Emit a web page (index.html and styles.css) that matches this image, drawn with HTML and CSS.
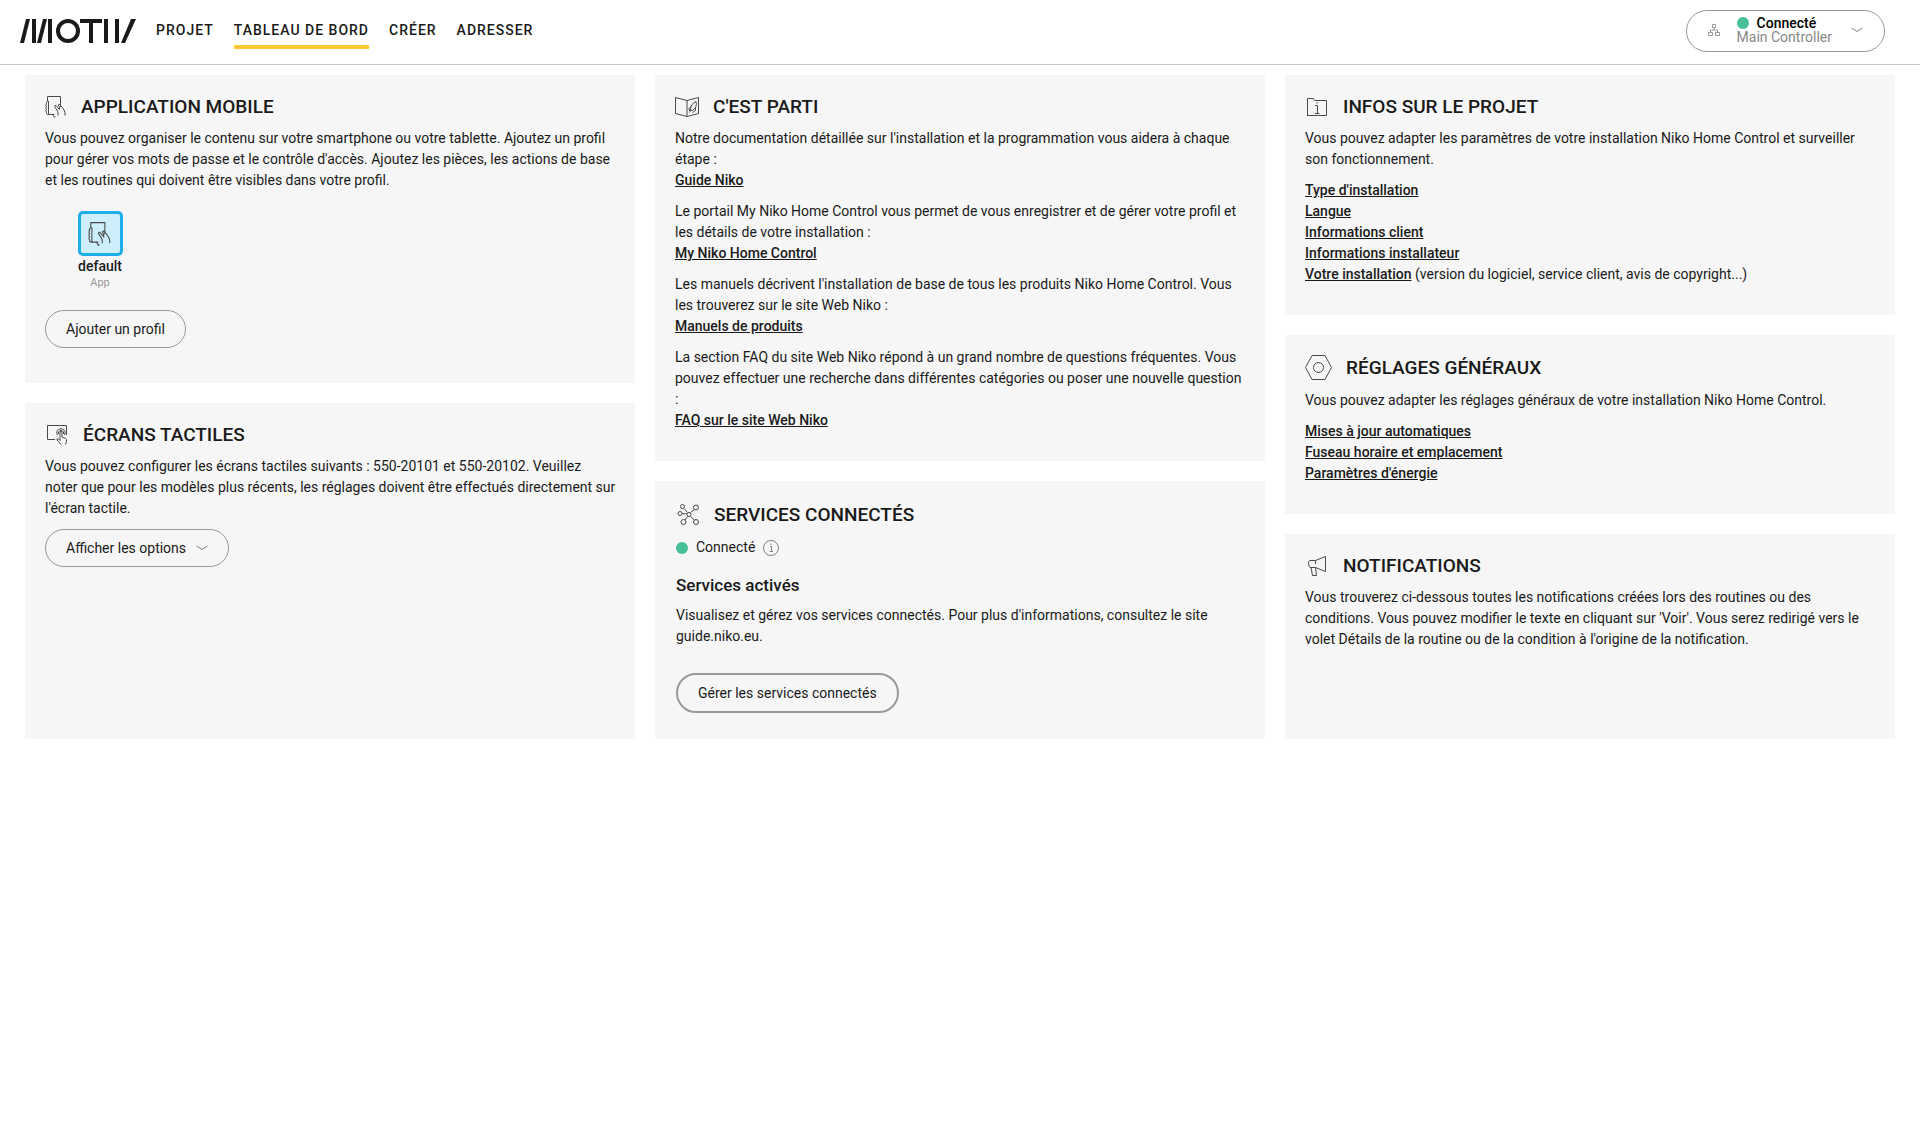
FILE: index.html
```html
<!DOCTYPE html>
<html lang="fr">
<head>
<meta charset="utf-8">
<meta name="viewport" content="width=device-width, initial-scale=1">
<title>Tableau de bord</title>
<link rel="stylesheet" href="styles.css">
</head>
<body>
<svg class="sprite" aria-hidden="true">
  <symbol id="tablet-hand" viewBox="0 0 22 24">
    <path d="M2.5 6.500V1.500H15.500V12M2.500 19.500H9.500M2.500 6.500Q.5 7.500 1.500 8.700 0 10.500 1.500 11.500 0 13 1.500 14.300 0 16 1.500 17.200 1 19 2.500 19.500M3.500 6V19M8 20L9.500 22.500 10.500 21.500M13 20.500V17L9.800 11.800Q9.500 10 11 10.500L14.500 14.500Q15 12 13.500 10.500 13 9 14.500 9.500L17 12 19 15Q20.500 17.500 20 20.500"/>
  </symbol>
  <symbol id="chevron" viewBox="0 0 12 6">
    <path d="M.5 1L6 4.500 11.500 1"/>
  </symbol>
</svg>

<header class="topbar">
  <a class="logo" href="#" aria-label="Motiv">
    <svg width="116" height="24" viewBox="0 0 116 24" aria-hidden="true">
      <path class="logo-solid" d="M0 24L6 0H10L4 24ZM12 0H16V24H12ZM17 24L23 0H27L21 24ZM28 0H32V24H28ZM60 0H82V4H73V24H69V4H60ZM84 0H88V24H84ZM95 0H99V24H95ZM101 24L111 0H116L105 24Z"/>
      <circle class="logo-ring" cx="48" cy="12" r="10"/>
    </svg>
  </a>
  <nav class="tabs">
    <a href="#">PROJET</a>
    <a href="#" class="active" aria-current="page">TABLEAU DE BORD</a>
    <a href="#">CRÉER</a>
    <a href="#">ADRESSER</a>
  </nav>
  <button class="controller" type="button">
    <svg class="icon faint" width="12" height="14" viewBox="0 0 12 14"><path d="M4.500 1.500H7.500V4.500H4.500ZM.5 9.500H4.500V12.500H.5ZM7.500 9.500H11.500V12.500H7.500ZM6 5V7M2.500 9V7H9.500V9"/></svg>
    <span class="controller-text">
      <span class="controller-state"><span class="dot"></span><b>Connecté</b></span>
      <span class="controller-name">Main Controller</span>
    </span>
    <svg class="icon soft" width="12" height="6"><use href="#chevron"/></svg>
  </button>
</header>

<main class="board">
  <div class="column">
    <section class="card">
      <h2><svg class="icon" width="22" height="24"><use href="#tablet-hand"/></svg>APPLICATION MOBILE</h2>
      <p>Vous pouvez organiser le contenu sur votre smartphone ou votre tablette. Ajoutez un profil pour gérer vos mots de passe et le contrôle d'accès. Ajoutez les pièces, les actions de base et les routines qui doivent être visibles dans votre profil.</p>
      <div class="profile">
        <button class="tile" type="button" aria-label="default"><svg class="icon" width="24" height="26"><use href="#tablet-hand"/></svg></button>
        <b>default</b>
        <small>App</small>
      </div>
      <button class="pill" type="button">Ajouter un profil</button>
    </section>
    <section class="card">
      <h2><svg class="icon" width="24" height="24" viewBox="0 0 24 24"><path d="M10 16.500H2.500V2.500H21.500V12M16 21.500L12 17Q11.500 15 13.500 16L15 17.500V9Q16 7.500 17 9V14L20.500 15.500Q22 16 21.500 18.500L20.500 21.500M12.500 12Q10.500 8 13.500 6.500 16 4.500 18.500 6.500 21.500 8.500 19.500 12M13.500 11V9Q16 5.500 18.500 9V11"/></svg>ÉCRANS TACTILES</h2>
      <p>Vous pouvez configurer les écrans tactiles suivants : 550-20101 et 550-20102. Veuillez noter que pour les modèles plus récents, les réglages doivent être effectués directement sur l'écran tactile.</p>
      <button class="pill" type="button">Afficher les options<svg class="icon soft" width="12" height="6"><use href="#chevron"/></svg></button>
    </section>
  </div>

  <div class="column">
    <section class="card">
      <h2><svg class="icon" width="24" height="24" viewBox="0 0 24 24"><path d="M.5 2.500L12 5.500 23.500 2.500V18.500L12 21.500 .5 18.500ZM12 5.500V21.500M15.500 15Q15.500 9 21 6.500 22.500 12 17.500 15.500ZM16 11.500L14 13.500 14.500 16M20.500 12.500L20.500 15.500 17.500 17.500M16 15L14.500 17.500"/></svg>C'EST PARTI</h2>
      <p>Notre documentation détaillée sur l'installation et la programmation vous aidera à chaque étape :<br><a href="#">Guide Niko</a></p>
      <p>Le portail My Niko Home Control vous permet de vous enregistrer et de gérer votre profil et les détails de votre installation :<br><a href="#">My Niko Home Control</a></p>
      <p>Les manuels décrivent l'installation de base de tous les produits Niko Home Control. Vous les trouverez sur le site Web Niko :<br><a href="#">Manuels de produits</a></p>
      <p>La section FAQ du site Web Niko répond à un grand nombre de questions fréquentes. Vous pouvez effectuer une recherche dans différentes catégories ou poser une nouvelle question :<br><a href="#">FAQ sur le site Web Niko</a></p>
    </section>
    <section class="card services">
      <h2><svg class="icon" width="24" height="24" viewBox="0 0 24 24"><path d="M8 5.500L11.500 9.500M18.500 6.500L14.500 9.500M6 10.500L11 11M9 17L11.500 13.500M18.500 17L14.500 13.500"/><circle cx="6.500" cy="3.500" r="2"/><circle cx="20" cy="4.500" r="2.500"/><circle cx="4" cy="10.500" r="2"/><circle cx="13" cy="11.500" r="2"/><circle cx="7.500" cy="19" r="2.500"/><circle cx="20" cy="19" r="2.500"/></svg>SERVICES CONNECTÉS</h2>
      <div class="status"><span class="dot"></span>Connecté
        <svg class="icon soft" width="16" height="16" viewBox="0 0 16 16"><circle cx="8" cy="8" r="7.500"/><path d="M7 6.500H8.500V11.500M6.500 11.500H10M8 3.500V5"/></svg>
      </div>
      <h3>Services activés</h3>
      <p>Visualisez et gérez vos services connectés. Pour plus d'informations, consultez le site guide.niko.eu.</p>
      <button class="pill strong" type="button">Gérer les services connectés</button>
    </section>
  </div>

  <div class="column">
    <section class="card">
      <h2><svg class="icon" width="24" height="24" viewBox="0 0 24 24"><path d="M2.500 21V3.500H8.500L9.500 5.500H21.500V20.500H2.500M10 10.500H12.500V18.500M10 18.500H14.500M12 7V8.500"/></svg>INFOS SUR LE PROJET</h2>
      <p>Vous pouvez adapter les paramètres de votre installation Niko Home Control et surveiller son fonctionnement.</p>
      <ul>
        <li><a href="#">Type d'installation</a></li>
        <li><a href="#">Langue</a></li>
        <li><a href="#">Informations client</a></li>
        <li><a href="#">Informations installateur</a></li>
        <li><a href="#">Votre installation</a> (version du logiciel, service client, avis de copyright...)</li>
      </ul>
    </section>
    <section class="card">
      <h2><svg class="icon" width="27" height="26" viewBox="0 0 27 26"><path d="M7 .5H20L26.500 12.500 20 24.500H7L.5 12.500Z"/><circle cx="13.500" cy="12.500" r="5"/></svg>RÉGLAGES GÉNÉRAUX</h2>
      <p>Vous pouvez adapter les réglages généraux de votre installation Niko Home Control.</p>
      <ul>
        <li><a href="#">Mises à jour automatiques</a></li>
        <li><a href="#">Fuseau horaire et emplacement</a></li>
        <li><a href="#">Paramètres d'énergie</a></li>
      </ul>
    </section>
    <section class="card">
      <h2><svg class="icon" width="24" height="24" viewBox="0 0 24 24"><path d="M10.500 6.500L20.500 2.500V17.500L10.500 13.500M10.500 6.500H5Q3 7 3.500 9.500 3.500 12 5 13.500H10.500M10.500 6.500V10M6 13.500L7.500 21.500H11.500L10.500 13.500"/></svg>NOTIFICATIONS</h2>
      <p>Vous trouverez ci-dessous toutes les notifications créées lors des routines ou des conditions. Vous pouvez modifier le texte en cliquant sur 'Voir'. Vous serez redirigé vers le volet Détails de la routine ou de la condition à l'origine de la notification.</p>
    </section>
  </div>
</main>
</body>
</html>
```
FILE: styles.css
```css
* {
  box-sizing: border-box;
}

body {
  margin: 0;
  background: #fff;
  color: #1a1a1a;
  font: 14px/21px Roboto, "Liberation Sans", sans-serif;
}

button {
  font: inherit;
  color: inherit;
  cursor: pointer;
}

a {
  color: inherit;
}

b,
p a,
li a {
  font-weight: 500;
}

.sprite {
  position: absolute;
  width: 0;
  height: 0;
}

.icon {
  flex: none;
  fill: none;
  stroke: #4a4a4a;
  stroke-width: 1;
}

.icon.soft {
  stroke: #808080;
}

.icon.faint {
  stroke: #999;
}

.dot {
  flex: none;
  width: 12px;
  height: 12px;
  border-radius: 50%;
  background: #48c095;
}

/* Top bar */
.topbar {
  display: flex;
  align-items: center;
  height: 65px;
  padding: 0 35px 3px 20px;
  border-bottom: 1px solid #c8c8c8;
}

.logo svg {
  display: block;
}

.logo-solid {
  fill: #1a1a1a;
}

.logo-ring {
  fill: none;
  stroke: #1a1a1a;
  stroke-width: 4;
}

.tabs {
  display: flex;
  gap: 20px;
  margin: 0 auto 0 20px;
}

.tabs a {
  padding: 8px 0 4px;
  border-bottom: 4px solid transparent;
  font-weight: 500;
  letter-spacing: 1px;
  text-decoration: none;
}

.tabs a.active {
  border-color: #ffc832;
}

.controller {
  display: flex;
  align-items: center;
  height: 42px;
  padding: 0 21px 2px;
  border: 1px solid #999;
  border-radius: 21px;
  background: #fff;
}

.controller-text {
  display: flex;
  flex-direction: column;
  margin: 0 19px 0 17px;
  line-height: 14px;
  text-align: left;
}

.controller-state {
  display: flex;
  align-items: center;
  gap: 8px;
  color: #000;
}

.controller-name {
  color: #888;
}

/* Dashboard cards */
.board {
  display: grid;
  grid-template-columns: repeat(3, 1fr);
  gap: 20px;
  padding: 10px 25px;
}

.column {
  display: flex;
  flex-direction: column;
  gap: 20px;
}

.card {
  padding: 20px 18px 20px 20px;
  background: #f6f6f6;
}

.card:last-child {
  flex: 1;
}

h2 {
  display: flex;
  align-items: center;
  gap: 14px;
  margin: 0 0 9px;
  font-size: 19px;
  font-weight: 500;
  line-height: 24px;
}

h3 {
  margin: 17px 0 9px;
  font-size: 17px;
  font-weight: 500;
}

p {
  margin: 0 0 10px;
}

ul {
  margin: 0 0 10px;
  padding: 0;
  list-style: none;
}

.pill {
  display: flex;
  align-items: center;
  gap: 10px;
  height: 38px;
  padding: 0 20px;
  border: 1px solid #999;
  border-radius: 19px;
  background: transparent;
}

.pill.strong {
  height: 40px;
  border-width: 2px;
  border-radius: 20px;
}

.profile {
  display: flex;
  flex-direction: column;
  align-items: center;
  width: 110px;
  margin: 20px 0 21px;
}

.profile + .pill {
  margin-bottom: 15px;
}

.profile small {
  color: #999;
  font-size: 11px;
  line-height: 12px;
}

.tile {
  display: grid;
  place-items: center;
  width: 45px;
  height: 45px;
  padding: 0;
  border: 3px solid #1eaeea;
  border-radius: 5px;
  background: #cdeefb;
}

.services {
  padding: 21px 21px 26px;
}

.services h2 {
  line-height: 26px;
}

.services .pill {
  margin-top: 26px;
}

.status {
  display: flex;
  align-items: center;
  gap: 8px;
}
```
